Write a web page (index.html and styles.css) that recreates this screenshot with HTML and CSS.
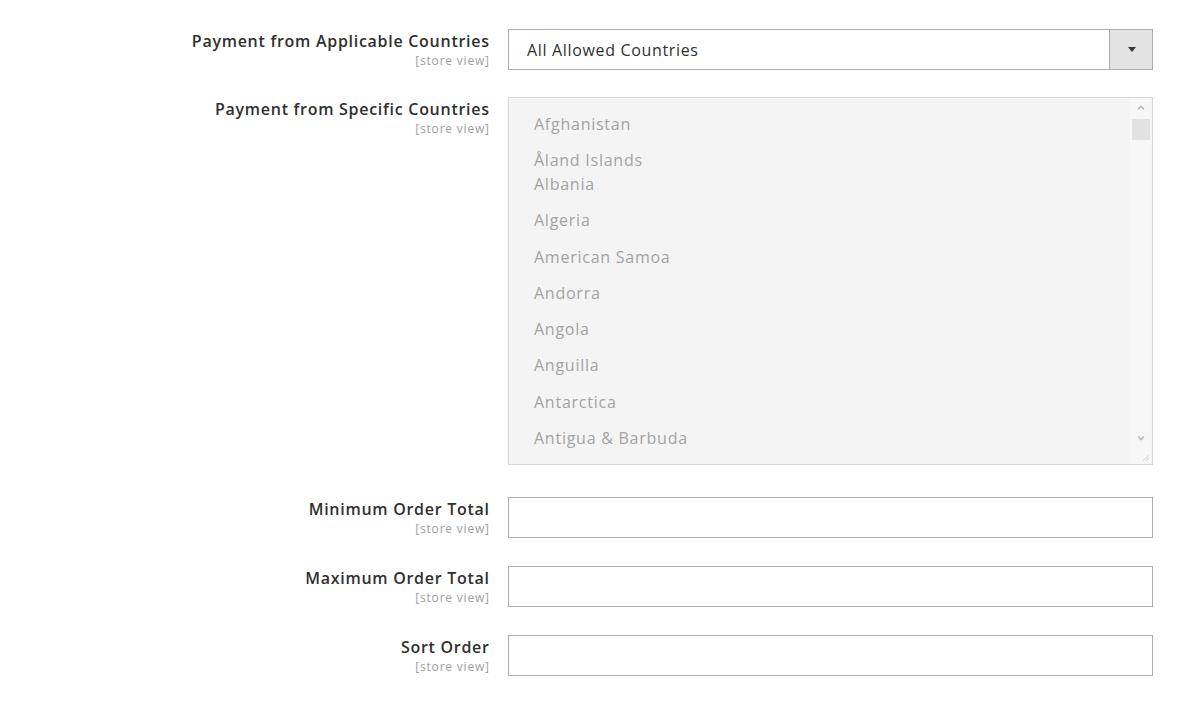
FILE: index.html
```html
<!DOCTYPE html>
<html>
<head>
<meta charset="utf-8">
<link rel="stylesheet" href="styles.css">
</head>
<body>
<div class="form">
  <div class="row row-first">
    <div class="label"><span class="title">Payment from Applicable Countries</span><span class="scope">[store view]</span></div>
    <div class="field">
      <div class="select">
        <span class="select-value">All Allowed Countries</span>
        <span class="select-btn"><span class="tri"></span></span>
      </div>
    </div>
  </div>
  <div class="row row-multi">
    <div class="label"><span class="title">Payment from Specific Countries</span><span class="scope">[store view]</span></div>
    <div class="field">
      <div class="multi">
        <div class="options">
          <div class="opt">Afghanistan</div>
          <div class="opt opt-a">Åland Islands</div>
          <div class="opt opt-b">Albania</div>
          <div class="opt">Algeria</div>
          <div class="opt">American Samoa</div>
          <div class="opt">Andorra</div>
          <div class="opt">Angola</div>
          <div class="opt">Anguilla</div>
          <div class="opt">Antarctica</div>
          <div class="opt">Antigua &amp; Barbuda</div>
        </div>
        <div class="scrollbar">
          <svg class="chev" width="10" height="8" viewBox="0 0 10 8"><path d="M2 5.5 L5 2.5 L8 5.5" fill="none" stroke="#b8b8b8" stroke-width="1.6"/></svg>
          <div class="thumb"></div>
          <div class="track"></div>
          <svg class="chev" width="10" height="8" viewBox="0 0 10 8"><path d="M2 2.5 L5 5.5 L8 2.5" fill="none" stroke="#b8b8b8" stroke-width="1.6"/></svg>
          <svg class="grip" width="10" height="10" viewBox="0 0 10 10"><path d="M9 3 L3 9 M9 6 L6 9" stroke="#d4d4d4" stroke-width="1"/></svg>
        </div>
      </div>
    </div>
  </div>
  <div class="row row-input row-gap-lg">
    <div class="label"><span class="title">Minimum Order Total</span><span class="scope">[store view]</span></div>
    <div class="field"><div class="input"></div></div>
  </div>
  <div class="row row-input">
    <div class="label"><span class="title">Maximum Order Total</span><span class="scope">[store view]</span></div>
    <div class="field"><div class="input"></div></div>
  </div>
  <div class="row row-input">
    <div class="label"><span class="title">Sort Order</span><span class="scope">[store view]</span></div>
    <div class="field"><div class="input"></div></div>
  </div>
</div>
</body>
</html>
```

FILE: styles.css
```css
html, body {
  margin: 0;
  padding: 0;
  background: #ffffff;
}
body {
  font-family: "Open Sans", "Liberation Sans", sans-serif;
  color: #303030;
  width: 1186px;
  height: 702px;
  overflow: hidden;
}
.form {
  display: flex;
  flex-direction: column;
  padding-top: 29px;
}
.row {
  display: flex;
  gap: 19px;
}
.row-multi { margin-top: 27px; }
.row-gap-lg { margin-top: 32px !important; }
.row-input { margin-top: 28px; }
.label {
  width: 489px;
  flex: none;
  display: flex;
  flex-direction: column;
  align-items: flex-end;
  text-align: right;
  padding-top: 2px;
}
.title {
  font-size: 16px;
  font-weight: 600;
  line-height: 20px;
  letter-spacing: 0.72px;
  margin-right: -0.7px;
  color: #303030;
}
.scope {
  font-size: 12px;
  line-height: 14px;
  letter-spacing: 0.8px;
  margin-right: -0.8px;
  margin-top: 3px;
  color: #9e9e9e;
}
.field {
  width: 645px;
  flex: none;
}
.select {
  height: 41px;
  box-sizing: border-box;
  border: 1px solid #adadad;
  display: flex;
  align-items: center;
  background: #fff;
}
.select-value {
  flex: 1;
  padding-left: 18px;
  font-size: 16px;
  letter-spacing: 0.66px;
  color: #303030;
}
.select-btn {
  width: 42px;
  height: 100%;
  background: #e3e3e3;
  border-left: 1px solid #adadad;
  display: flex;
  align-items: center;
  justify-content: center;
}
.tri {
  width: 0;
  height: 0;
  border-left: 4px solid transparent;
  border-right: 4px solid transparent;
  border-top: 5px solid #41362f;
  margin-left: 2px;
}
.multi {
  height: 368px;
  box-sizing: border-box;
  border: 1px solid #d6d6d6;
  background: #f4f4f4;
  display: flex;
}
.options {
  flex: 1;
  padding-top: 8px;
  padding-left: 25px;
  font-size: 16px;
  letter-spacing: 0.75px;
  color: #a3a3a3;
}
.opt {
  height: 36.25px;
  line-height: 36px;
}
.opt-a {
  height: 30px;
  line-height: 24px;
  padding-top: 6px;
  box-sizing: border-box;
}
.opt-b {
  height: 30px;
  line-height: 24px;
}
.scrollbar {
  width: 21px;
  margin-right: 1px;
  background: #f7f7f7;
  display: flex;
  flex-direction: column;
  align-items: center;
  padding-top: 6px;
  padding-bottom: 2px;
}
.chev { flex: none; }
.thumb {
  width: 18px;
  height: 21px;
  background: #e2e2e2;
  margin-top: 7px;
}
.track { flex: 1; }
.grip {
  margin-top: 10px;
  margin-left: 8px;
}
.input {
  height: 41px;
  box-sizing: border-box;
  border: 1px solid #adadad;
  background: #fff;
}
```
